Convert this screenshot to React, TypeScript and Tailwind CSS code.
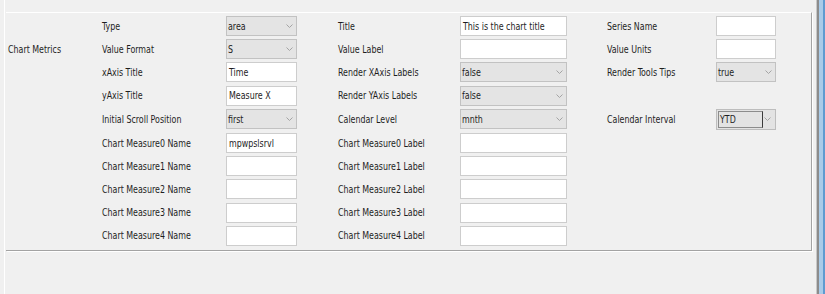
import React from "react";

type Cell =
  | { k: "label"; t: string }
  | { k: "input"; v?: string }
  | { k: "select"; v: string; focus?: boolean }
  | { k: "empty" };

const L = (t: string): Cell => ({ k: "label", t });
const I = (v?: string): Cell => ({ k: "input", v });
const S = (v: string, focus?: boolean): Cell => ({ k: "select", v, focus });
const E: Cell = { k: "empty" };

const rows: Cell[][] = [
  [E, L("Type"), S("area"), E, L("Title"), I("This is the chart title"), E, L("Series Name"), I()],
  [L("Chart Metrics"), L("Value Format"), S("S"), E, L("Value Label"), I(), E, L("Value Units"), I()],
  [E, L("xAxis Title"), I("Time"), E, L("Render XAxis Labels"), S("false"), E, L("Render Tools Tips"), S("true")],
  [E, L("yAxis Title"), I("Measure X"), E, L("Render YAxis Labels"), S("false"), E, E, E],
  [E, L("Initial Scroll Position"), S("first"), E, L("Calendar Level"), S("mnth"), E, L("Calendar Interval"), S("YTD", true)],
  [E, L("Chart Measure0 Name"), I("mpwpslsrvl"), E, L("Chart Measure0 Label"), I(), E, E, E],
  [E, L("Chart Measure1 Name"), I(), E, L("Chart Measure1 Label"), I(), E, E, E],
  [E, L("Chart Measure2 Name"), I(), E, L("Chart Measure2 Label"), I(), E, E, E],
  [E, L("Chart Measure3 Name"), I(), E, L("Chart Measure3 Label"), I(), E, E, E],
  [E, L("Chart Measure4 Name"), I(), E, L("Chart Measure4 Label"), I(), E, E, E],
];

function T({ children }: { children: React.ReactNode }) {
  return (
    <span className="inline-block whitespace-nowrap origin-left scale-x-[0.8] translate-y-[1px]">
      {children}
    </span>
  );
}

function Chevron() {
  return (
    <svg width="7" height="4" viewBox="0 0 7 4" className="shrink-0">
      <path d="M0.5 0.5 L3.5 3.5 L6.5 0.5" fill="none" stroke="#a4a4a4" strokeWidth="1" />
    </svg>
  );
}

function CellView({ c }: { c: Cell }) {
  if (c.k === "label")
    return (
      <div className="h-[20px] flex items-center">
        <T>{c.t}</T>
      </div>
    );
  if (c.k === "input")
    return (
      <div className="h-[20px] flex items-center border border-[#cdcdcd] bg-white pl-[2px] overflow-hidden">
        <T>{c.v ?? ""}</T>
      </div>
    );
  if (c.k === "select") {
    if (c.focus)
      return (
        <div className="h-[21px] flex items-center justify-between border border-[#bdbdbd] bg-[#e3e3e3] pl-[1px] pr-[4px]">
          <div className="h-[17px] w-[45px] flex items-center border border-[#8c8c8c] border-r-[#3a3a3a] border-r-dotted pl-[1px]">
            <T>{c.v}</T>
          </div>
          <Chevron />
        </div>
      );
    return (
      <div className="h-[20px] flex items-center justify-between border border-[#c2c2c2] bg-[#e4e4e4] pl-[1px] pr-[3px]">
        <T>{c.v}</T>
        <Chevron />
      </div>
    );
  }
  return <div className="h-[20px]" />;
}

export default function App() {
  return (
    <div className="flex h-[294px] w-[825px] bg-[#f0f0f0] text-[11px] text-[#1e1e1e] font-['DejaVu_Sans_Condensed','DejaVu_Sans',sans-serif] overflow-hidden">
      <div className="w-[4px]" />
      <div className="w-[1px] bg-white" />
      <div className="w-[1px]" />
      <div className="w-[806px] pt-[12px]">
        <div className="border-t border-t-white border-r border-r-[#a3a3a3] border-b border-b-[#a3a3a3] shadow-[1px_1px_0_#ffffff] pl-[2px] pt-[3px] pb-[4px]">
          <div className="grid grid-cols-[94px_124px_71px_41px_122px_107px_40px_109px_60px] gap-y-[3.2px] items-center">
            {rows.map((r, i) => (
              <React.Fragment key={i}>
                {r.map((c, j) => (
                  <CellView key={j} c={c} />
                ))}
              </React.Fragment>
            ))}
          </div>
        </div>
      </div>
      <div className="w-[4px]" />
      <div className="w-[1px] bg-[#c8c8c8]" />
      <div className="w-[2px] bg-[#8c8c8c]" />
      <div className="w-[4px] bg-[#a9cbe8]" />
      <div className="w-[2px] bg-[#5f9bd0]" />
    </div>
  );
}
